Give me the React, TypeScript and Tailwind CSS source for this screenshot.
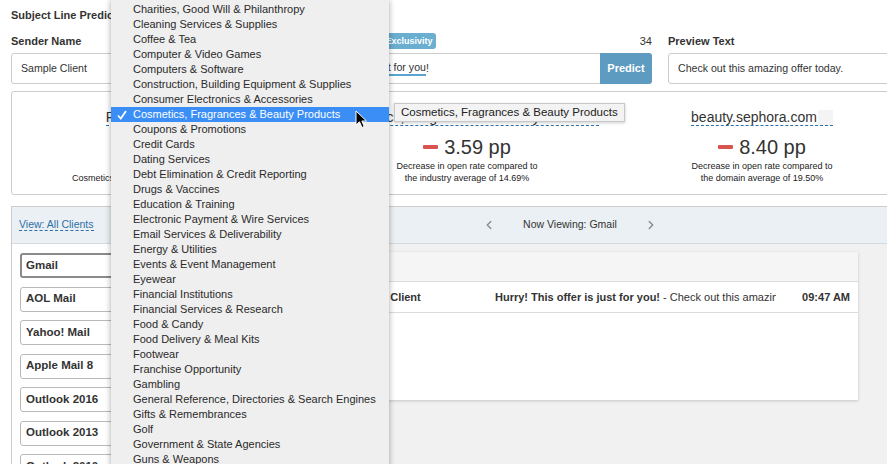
import { ChevronLeft, ChevronRight, Star } from "lucide-react"

const industries = [
  "Charities, Good Will & Philanthropy",
  "Cleaning Services & Supplies",
  "Coffee & Tea",
  "Computer & Video Games",
  "Computers & Software",
  "Construction, Building Equipment & Supplies",
  "Consumer Electronics & Accessories",
  "Cosmetics, Fragrances & Beauty Products",
  "Coupons & Promotions",
  "Credit Cards",
  "Dating Services",
  "Debt Elimination & Credit Reporting",
  "Drugs & Vaccines",
  "Education & Training",
  "Electronic Payment & Wire Services",
  "Email Services & Deliverability",
  "Energy & Utilities",
  "Events & Event Management",
  "Eyewear",
  "Financial Institutions",
  "Financial Services & Research",
  "Food & Candy",
  "Food Delivery & Meal Kits",
  "Footwear",
  "Franchise Opportunity",
  "Gambling",
  "General Reference, Directories & Search Engines",
  "Gifts & Remembrances",
  "Golf",
  "Government & State Agencies",
  "Guns & Weapons",
  "Health & Fitness",
]

const selected = "Cosmetics, Fragrances & Beauty Products"

const clients = [
  "Gmail",
  "AOL Mail",
  "Yahoo! Mail",
  "Apple Mail 8",
  "Outlook 2016",
  "Outlook 2013",
  "Outlook 2010",
]

export default function App() {
  return (
    <div className="relative h-[464px] w-[887px] overflow-hidden bg-white font-['Liberation_Sans',Arial,sans-serif] text-[#333]">
      <div className="w-[940px] px-[11px] pt-[9px]">
        {/* header */}
        <h1 className="text-[11px] font-bold leading-[13px]">Subject Line Predictor</h1>

        {/* inputs */}
        <div className="mt-[11px] flex gap-4">
          <div className="w-[248px]">
            <div className="flex h-[16px] items-center text-[11px] font-bold">Sender Name</div>
            <div className="mt-[4px] flex h-[31px] items-center rounded-[3px] border border-[#ccc] px-[9px] text-[10.6px]">
              Sample Client
            </div>
          </div>

          <div className="w-[377px]">
            <div className="flex h-[16px] items-center text-[11px] font-bold">
              <span>Subject Line</span>
              <span className="ml-[4px] rounded-[3px] bg-[#6aaed0] px-[3px] text-[9px] leading-[16px] text-white">Urgent</span>
              <span className="ml-[2px] rounded-[3px] bg-[#6aaed0] px-[4px] text-[9px] leading-[16px] text-white">Exclusivity</span>
              <span className="ml-auto text-[11px] font-normal">34</span>
            </div>
            <div className="mt-[4px] flex h-[31px]">
              <div className="flex flex-1 items-center rounded-l-[3px] border border-r-0 border-[#ccc] px-[9px] text-[10.6px]">
                Hurry! This offer is&nbsp;
                <span className="border-b-2 border-[#5aa5cf] leading-[13px]">just for you</span>!
              </div>
              <div className="flex w-[52px] items-center justify-center rounded-r-[3px] bg-[#5d9bc1] text-[11px] font-bold text-white">
                Predict
              </div>
            </div>
          </div>

          <div className="flex-1">
            <div className="flex h-[16px] items-center text-[11px] font-bold">Preview Text</div>
            <div className="mt-[4px] flex h-[31px] items-center rounded-[3px] border border-[#ccc] px-[9px] text-[10.6px]">
              Check out this amazing offer today.
            </div>
          </div>
        </div>

        {/* stats */}
        <div className="mt-[7px] grid h-[104px] grid-cols-[318px_274px_316px] rounded-[3px] border border-[#ccc]">
          <Stat
            heading="Predicted Open Rate"
            value="11.10%"
            lines={["Predicted open rate for", "Cosmetics, Fragrances & Beauty Products emails"]}
          />
          <Stat
            heading="Cosmetics, Fragrances & Beauty Products"
            value="3.59 pp"
            negative
            lines={["Decrease in open rate compared to", "the industry average of 14.69%"]}
          />
          <Stat
            heading="beauty.sephora.com"
            box
            value="8.40 pp"
            negative
            lines={["Decrease in open rate compared to", "the domain average of 19.50%"]}
          />
        </div>

        {/* preview */}
        <div className="mt-[11px] h-[300px] border border-b-0 border-[#ccc]">
          <div className="flex h-[37px] items-center border-b border-[#d3d9df] bg-[#ebf0f4] text-[10.5px]">
            <div className="w-[259px] pl-[7px]">
              <span className="border-b border-dashed border-[#2f6fa7] text-[#2f6fa7]">View: All Clients</span>
            </div>
            <div className="flex w-[598px] items-center justify-center gap-[27px]">
              <ChevronLeft size={14} strokeWidth={2.5} className="text-[#8c8c8c]" />
              <span>Now Viewing: Gmail</span>
              <ChevronRight size={14} strokeWidth={2.5} className="text-[#8c8c8c]" />
            </div>
          </div>

          <div className="flex h-full">
            <div className="flex w-[259px] flex-col gap-[8.5px] bg-white px-[8px] pt-[9px]">
              {clients.map((c) => (
                <div
                  key={c}
                  className={
                    c === "Gmail"
                      ? "flex h-[25px] shrink-0 items-center rounded-[3px] border-2 border-[#8a8a8a] pl-[4px] text-[11.5px] font-bold"
                      : "flex h-[25px] shrink-0 items-center rounded-[3px] border border-[#b9b9b9] pl-[5px] text-[11.5px] font-bold"
                  }
                >
                  {c}
                </div>
              ))}
            </div>

            <div className="flex-1 bg-[#f1f1f1] pl-[11px] pt-[8px]">
              <div className="h-[148px] w-[576px] bg-white shadow-[0_1px_3px_rgba(0,0,0,0.18)]">
                <div className="h-[30px] border-b border-[#dcdcdc] bg-[#f5f5f5]" />
                <div className="flex h-[31px] items-center border-b border-[#dcdcdc] text-[11px]">
                  <div className="flex w-[66px] items-center gap-[8px] pl-[12px]">
                    <span className="h-[11px] w-[11px] border border-[#aaa]" />
                    <Star size={12} className="text-[#bbb]" />
                  </div>
                  <div className="w-[147px] font-bold">Sample Client</div>
                  <div className="w-[281px] overflow-hidden whitespace-nowrap">
                    <span className="font-bold">Hurry! This offer is just for you!</span> - Check out this amazing offer today.
                  </div>
                  <div className="flex-1 pr-[8px] text-right font-bold">09:47 AM</div>
                </div>
              </div>
            </div>
          </div>
        </div>
      </div>

      {/* open select menu */}
      <div className="absolute left-[111px] top-0 h-[480px] w-[278px] bg-[#efefef] pt-[2px] shadow-[0_0_6px_rgba(0,0,0,0.35)]">
        {industries.map((item) => (
          <div
            key={item}
            className={
              item === selected
                ? "relative h-[15px] whitespace-nowrap bg-[#3a8ef6] pl-[22px] text-[11px] leading-[15px] text-white"
                : "h-[15px] whitespace-nowrap pl-[22px] text-[11px] leading-[15px] text-[#2a2a2a]"
            }
          >
            {item === selected && (
              <svg className="absolute left-[6px] top-[3px]" width="10" height="10" viewBox="0 0 10 10">
                <path d="M1 5.5 L3.8 8.5 L9 1" fill="none" stroke="white" strokeWidth="1.8" />
              </svg>
            )}
            {item}
          </div>
        ))}
      </div>

      {/* tooltip */}
      <div className="absolute left-[394px] top-[103px] h-[19px] whitespace-nowrap border border-[#c8c8c8] bg-[#f3f3f3] px-[6px] text-[11.5px] leading-[17px] text-[#222] shadow-[0_1px_3px_rgba(0,0,0,0.2)]">
        Cosmetics, Fragrances &amp; Beauty Products
      </div>

      {/* mouse pointer */}
      <svg className="absolute left-[355px] top-[110px]" width="13" height="19" viewBox="0 0 13 19">
        <path
          d="M1 1 L1 15 L4.5 11.8 L7 17.5 L9.2 16.5 L6.8 11 L11.5 11 Z"
          fill="black"
          stroke="white"
          strokeWidth="1"
          strokeLinejoin="round"
        />
      </svg>
    </div>
  )
}

function Stat({
  heading,
  value,
  lines,
  negative,
  box,
}: {
  heading: string
  value: string
  lines: string[]
  negative?: boolean
  box?: boolean
}) {
  return (
    <div className="flex flex-col items-center pt-[18px]">
      <div className="flex items-center whitespace-nowrap border-b border-dashed border-[#2f6fa7] text-[14px] leading-[15px]">
        {heading}
        {box && <span className="ml-[1px] inline-block h-[15px] w-[15px] bg-[#f4f4f4]" />}
      </div>
      <div className="mt-[11px] flex h-[20px] items-center text-[20px] leading-[20px]">
        {negative && <span className="mr-[6px] h-[4px] w-[15px] rounded-[1px] bg-[#d9534f]" />}
        {value}
      </div>
      <div className="mt-[3px] text-center text-[9px] leading-[12px] text-[#222]">
        {lines.map((l) => (
          <div key={l}>{l}</div>
        ))}
      </div>
    </div>
  )
}
